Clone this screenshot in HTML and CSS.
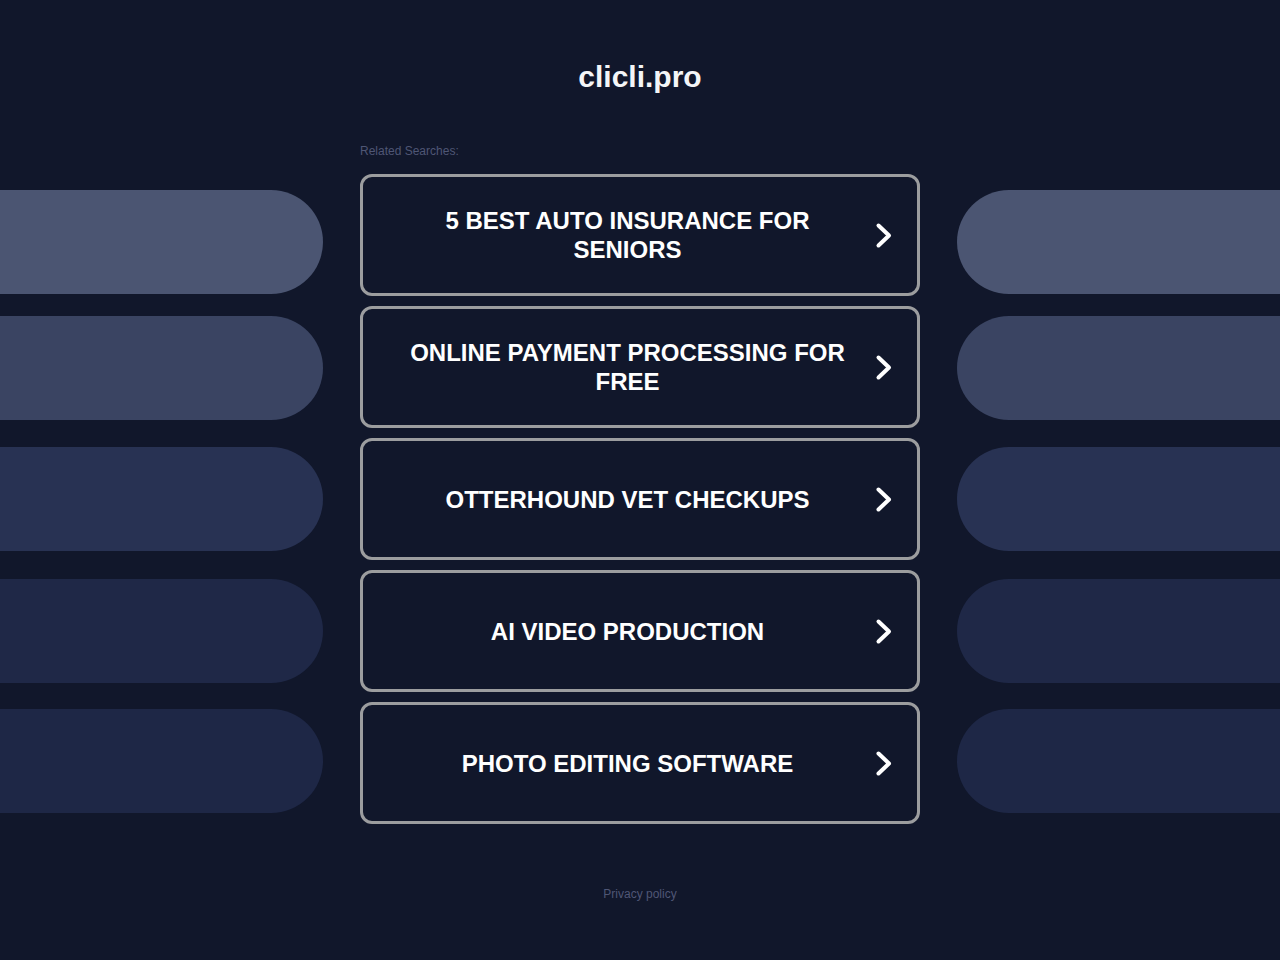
FILE: index.html
```html
<!DOCTYPE html>
<html lang="en">
<head>
<meta charset="utf-8">
<title>clicli.pro</title>
<link rel="stylesheet" href="styles.css">
</head>
<body>
<header class="header">
  <h1 class="domain">clicli.pro</h1>
</header>
<main class="layout">
  <div class="label">Related Searches:</div>

  <div class="pill pill-left pill-1 row-1"></div>
  <div class="pill pill-left pill-2 row-2"></div>
  <div class="pill pill-left pill-3 row-3"></div>
  <div class="pill pill-left pill-4 row-4"></div>
  <div class="pill pill-left pill-5 row-5"></div>

  <a class="card row-1" href="#"><span class="card-text">5 BEST AUTO INSURANCE FOR SENIORS</span><svg class="chev" viewBox="0 0 18 27" width="18" height="27"><path d="M3.5 3.5 L14 13.5 L3.5 23.5" fill="none" stroke="#fff" stroke-width="4" stroke-linecap="round" stroke-linejoin="round"/></svg></a>
  <a class="card row-2" href="#"><span class="card-text">ONLINE PAYMENT PROCESSING FOR FREE</span><svg class="chev" viewBox="0 0 18 27" width="18" height="27"><path d="M3.5 3.5 L14 13.5 L3.5 23.5" fill="none" stroke="#fff" stroke-width="4" stroke-linecap="round" stroke-linejoin="round"/></svg></a>
  <a class="card row-3" href="#"><span class="card-text">OTTERHOUND VET CHECKUPS</span><svg class="chev" viewBox="0 0 18 27" width="18" height="27"><path d="M3.5 3.5 L14 13.5 L3.5 23.5" fill="none" stroke="#fff" stroke-width="4" stroke-linecap="round" stroke-linejoin="round"/></svg></a>
  <a class="card row-4" href="#"><span class="card-text">AI VIDEO PRODUCTION</span><svg class="chev" viewBox="0 0 18 27" width="18" height="27"><path d="M3.5 3.5 L14 13.5 L3.5 23.5" fill="none" stroke="#fff" stroke-width="4" stroke-linecap="round" stroke-linejoin="round"/></svg></a>
  <a class="card row-5" href="#"><span class="card-text">PHOTO EDITING SOFTWARE</span><svg class="chev" viewBox="0 0 18 27" width="18" height="27"><path d="M3.5 3.5 L14 13.5 L3.5 23.5" fill="none" stroke="#fff" stroke-width="4" stroke-linecap="round" stroke-linejoin="round"/></svg></a>

  <div class="pill pill-right pill-1 row-1"></div>
  <div class="pill pill-right pill-2 row-2"></div>
  <div class="pill pill-right pill-3 row-3"></div>
  <div class="pill pill-right pill-4 row-4"></div>
  <div class="pill pill-right pill-5 row-5"></div>
</main>
<footer class="footer">
  <a class="privacy" href="#">Privacy policy</a>
</footer>
</body>
</html>
```
FILE: styles.css
```css
html, body {
  margin: 0;
  padding: 0;
  background: #11172b;
  font-family: "Liberation Sans", Arial, sans-serif;
}

.header {
  padding-top: 60px;
  text-align: center;
}

.domain {
  margin: 0;
  font-size: 30px;
  line-height: 34px;
  font-weight: bold;
  color: #f4f5f7;
}

.layout {
  margin-top: 50px;
  display: grid;
  grid-template-columns: 1fr 560px 1fr;
  grid-template-rows: auto repeat(5, 122px);
  column-gap: 37px;
  row-gap: 10px;
}

.label {
  grid-column: 2;
  grid-row: 1;
  font-size: 12px;
  line-height: 14px;
  color: #4f5675;
  margin-bottom: 6px;
}

.row-1 { grid-row: 2; }
.row-2 { grid-row: 3; }
.row-3 { grid-row: 4; }
.row-4 { grid-row: 5; }
.row-5 { grid-row: 6; }

.pill {
  height: 104px;
  align-self: center;
}

.pill-left {
  grid-column: 1;
  border-radius: 0 52px 52px 0;
}

.pill-right {
  grid-column: 3;
  border-radius: 52px 0 0 52px;
}

.pill-1 { background: #4b5572; margin-top: 14px; }
.pill-2 { background: #3a4462; margin-top: 2px; }
.pill-3 { background: #283253; }
.pill-4 { background: #1f2847; }
.pill-5 { background: #1e2746; margin-bottom: 4px; }

.card {
  grid-column: 2;
  box-sizing: border-box;
  display: flex;
  align-items: center;
  padding: 0 24px 0 42px;
  border: 3px solid #9c9d9f;
  border-radius: 12px;
  text-decoration: none;
  color: #ffffff;
}

.card-text {
  flex: 1;
  text-align: center;
  font-size: 24px;
  line-height: 29px;
  font-weight: bold;
  color: #ffffff;
}

.chev {
  flex: none;
  margin-left: 25px;
}

.footer {
  margin-top: 60px;
  text-align: center;
}

.privacy {
  font-size: 12px;
  line-height: 14px;
  color: #4f5675;
  text-decoration: none;
}
```
